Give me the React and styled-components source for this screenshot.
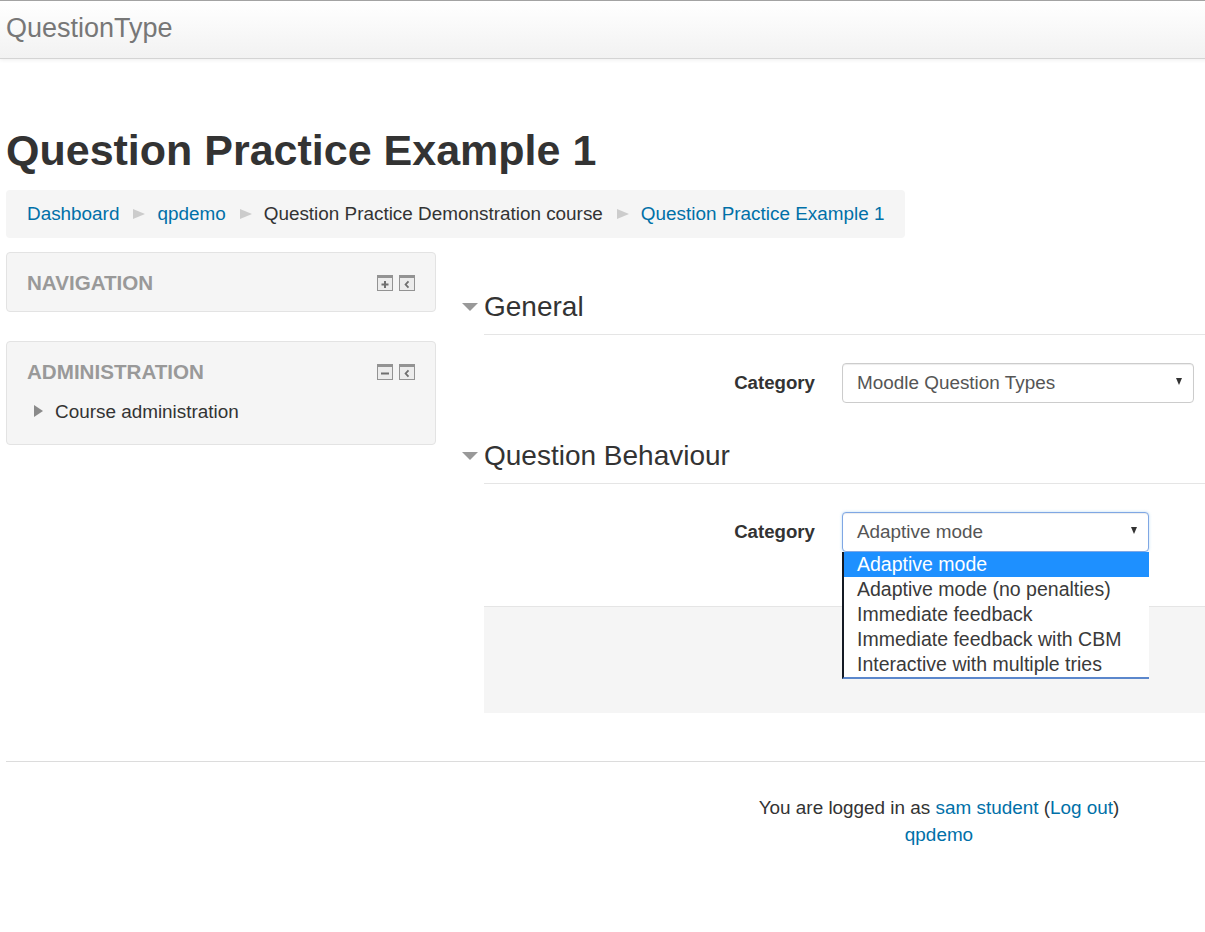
import React from "react";
import styled, { createGlobalStyle } from "styled-components";

const GlobalStyle = createGlobalStyle`
  html, body {
    margin: 0;
    padding: 0;
    overflow-x: hidden;
    background: #fff;
  }
  body {
    font-family: "Liberation Sans", Arial, Helvetica, sans-serif;
    font-size: 18.9px;
    line-height: 26.67px;
    color: #333;
  }
  * { box-sizing: border-box; }
`;

const Shell = styled.div`
  width: 1872px;
`;

const Navbar = styled.header`
  border-top: 1px solid #a3a3a3;
  border-bottom: 1px solid #d4d4d4;
  background: linear-gradient(to bottom, #ffffff, #f2f2f2);
  box-shadow: 0 1px 4px rgba(0, 0, 0, 0.07);
  padding: 12px 6px 15px;
`;

const Brand = styled.span`
  display: block;
  font-size: 27px;
  line-height: 30px;
  color: #777;
`;

const Page = styled.div`
  margin-left: 6px;
  width: 1866px;
`;

const Title = styled.h2`
  margin: 67px 0 16px;
  font-size: 43px;
  line-height: 48px;
  font-weight: bold;
  color: #333;
`;

const Crumbs = styled.nav`
  display: inline-flex;
  align-items: center;
  background: #f5f5f5;
  border-radius: 4px;
  padding: 10.67px 21px;
  height: 48px;
`;

const CrumbLink = styled.a`
  color: #0070a8;
  text-decoration: none;
`;

const CrumbText = styled.span`
  color: #333;
`;

const Sep = styled.span`
  display: inline-block;
  width: 0;
  height: 0;
  border-left: 12px solid #ccc;
  border-top: 5.5px solid transparent;
  border-bottom: 5.5px solid transparent;
  margin: 0 12px 0 14px;
`;

const Columns = styled.div`
  display: grid;
  grid-template-columns: 430px 1fr;
  column-gap: 48px;
  margin-top: 14px;
  align-items: start;
`;

const Side = styled.aside`
  display: flex;
  flex-direction: column;
  gap: 29px;
`;

const Block = styled.section`
  background: #f5f5f5;
  border: 1px solid #e3e3e3;
  border-radius: 4px;
  padding: 17px 20px 14px;
`;

const BlockHeader = styled.div`
  display: flex;
  align-items: center;
  justify-content: space-between;
`;

const BlockTitle = styled.h3`
  margin: 0;
  font-size: 20.6px;
  line-height: 26.67px;
  font-weight: bold;
  color: #999;
`;

const Controls = styled.div`
  display: flex;
  gap: 6px;
`;

const BlockContent = styled.ul`
  list-style: none;
  margin: 0;
  padding: 14px 0 4px 7px;
`;

const TreeItem = styled.li`
  display: flex;
  align-items: center;
  gap: 12px;
  color: #333;
`;

const Caret = styled.span`
  display: inline-block;
  width: 0;
  height: 0;
  border-left: 9px solid #8a8a8a;
  border-top: 6.5px solid transparent;
  border-bottom: 6.5px solid transparent;
  margin-top: -4px;
`;

const Main = styled.main`
  padding-top: 35px;
`;

const Fieldset = styled.fieldset`
  border: 0;
  margin: 0 0 33px;
  padding: 0;
  min-width: 0;
`;

const Legend = styled.div`
  position: relative;
  font-size: 28px;
  line-height: 40px;
  color: #333;
  padding-bottom: 7px;
  border-bottom: 1px solid #e5e5e5;
  margin-bottom: 28px;
`;

const LegendToggle = styled.span`
  position: absolute;
  left: -22px;
  top: 16px;
  width: 0;
  height: 0;
  border-top: 8px solid #999;
  border-left: 8px solid transparent;
  border-right: 8px solid transparent;
`;

const FormRow = styled.div`
  display: grid;
  grid-template-columns: 331px auto;
  column-gap: 27px;
  align-items: center;
  justify-content: start;
`;

const Label = styled.label`
  text-align: right;
  font-weight: bold;
  font-size: 18.67px;
  color: #333;
`;

const SelectWrap = styled.div`
  position: relative;
  width: ${(p) => p.$width}px;
`;

const SelectBox = styled.div`
  display: flex;
  align-items: center;
  justify-content: space-between;
  height: 40px;
  padding: 0 11px 0 14px;
  background: #fff;
  border: 1px solid ${(p) => (p.$focused ? "#7fa7e4" : "#ccc")};
  border-radius: 4px;
  box-shadow: ${(p) =>
    p.$focused
      ? "inset 0 1px 1px rgba(0,0,0,.075), 0 0 3px rgba(102,175,233,.45)"
      : "inset 0 1px 1px rgba(0,0,0,.075)"};
  color: #555;
`;

const Arrow = styled.span`
  width: 0;
  height: 0;
  border-top: 7px solid #333;
  border-left: 3.5px solid transparent;
  border-right: 3.5px solid transparent;
  margin-top: -3px;
`;

const OptionList = styled.ul`
  position: absolute;
  left: 0;
  right: 0;
  top: 40px;
  margin: 0;
  padding: 0;
  list-style: none;
  background: #fff;
  border-left: 2px solid #141a24;
  border-bottom: 2px solid #5b87cc;
  z-index: 5;
`;

const Option = styled.li`
  height: 25px;
  line-height: 25px;
  font-size: 19.5px;
  padding-left: 13px;
  white-space: nowrap;
  color: ${(p) => (p.$active ? "#fff" : "#3a3a3a")};
  background: ${(p) => (p.$active ? "#1e90ff" : "transparent")};
`;

const Actions = styled.div`
  height: 107px;
  margin-top: 54px;
  background: #f5f5f5;
  border-top: 1px solid #e5e5e5;
`;

const Footer = styled.footer`
  margin-top: 48px;
  border-top: 1px solid #dcdcdc;
  padding-top: 33px;
  text-align: center;
  color: #333;
`;

const FooterLine = styled.div`
  line-height: 26.67px;
`;

const FooterLink = styled.a`
  color: #0070a8;
  text-decoration: none;
`;

function ControlIcon({ kind }) {
  return (
    <svg width="16" height="16" viewBox="0 0 16 16" aria-hidden="true">
      <rect x="0.5" y="0.5" width="15" height="15" fill="#ececec" stroke="#939393" />
      <rect x="0" y="0" width="16" height="3" fill="#939393" />
      {kind === "plus" && (
        <path d="M4.5 9.5h7M8 6v7" stroke="#6f6f6f" strokeWidth="2" fill="none" />
      )}
      {kind === "minus" && (
        <path d="M4 9.5h8" stroke="#6f6f6f" strokeWidth="2" fill="none" />
      )}
      {kind === "dock" && (
        <path d="M9.5 6.3 6.6 9.5l2.9 3.2" stroke="#6f6f6f" strokeWidth="1.8" fill="none" />
      )}
    </svg>
  );
}

const behaviours = [
  "Adaptive mode",
  "Adaptive mode (no penalties)",
  "Immediate feedback",
  "Immediate feedback with CBM",
  "Interactive with multiple tries",
];

export default function App() {
  return (
    <>
      <GlobalStyle />
      <Shell>
        <Navbar>
          <Brand>QuestionType</Brand>
        </Navbar>
        <Page>
          <Title>Question Practice Example 1</Title>
          <Crumbs>
            <CrumbLink href="#">Dashboard</CrumbLink>
            <Sep />
            <CrumbLink href="#">qpdemo</CrumbLink>
            <Sep />
            <CrumbText>Question Practice Demonstration course</CrumbText>
            <Sep />
            <CrumbLink href="#">Question Practice Example 1</CrumbLink>
          </Crumbs>
          <Columns>
            <Side>
              <Block>
                <BlockHeader>
                  <BlockTitle>NAVIGATION</BlockTitle>
                  <Controls>
                    <ControlIcon kind="plus" />
                    <ControlIcon kind="dock" />
                  </Controls>
                </BlockHeader>
              </Block>
              <Block>
                <BlockHeader>
                  <BlockTitle>ADMINISTRATION</BlockTitle>
                  <Controls>
                    <ControlIcon kind="minus" />
                    <ControlIcon kind="dock" />
                  </Controls>
                </BlockHeader>
                <BlockContent>
                  <TreeItem>
                    <Caret />
                    Course administration
                  </TreeItem>
                </BlockContent>
              </Block>
            </Side>
            <Main>
              <Fieldset>
                <Legend>
                  <LegendToggle />
                  General
                </Legend>
                <FormRow>
                  <Label>Category</Label>
                  <SelectWrap $width={352}>
                    <SelectBox>
                      Moodle Question Types
                      <Arrow />
                    </SelectBox>
                  </SelectWrap>
                </FormRow>
              </Fieldset>
              <Fieldset>
                <Legend>
                  <LegendToggle />
                  Question Behaviour
                </Legend>
                <FormRow>
                  <Label>Category</Label>
                  <SelectWrap $width={307}>
                    <SelectBox $focused>
                      Adaptive mode
                      <Arrow />
                    </SelectBox>
                    <OptionList>
                      {behaviours.map((b, i) => (
                        <Option key={b} $active={i === 0}>
                          {b}
                        </Option>
                      ))}
                    </OptionList>
                  </SelectWrap>
                </FormRow>
              </Fieldset>
              <Actions />
            </Main>
          </Columns>
          <Footer>
            <FooterLine>
              You are logged in as <FooterLink href="#">sam student</FooterLink> (
              <FooterLink href="#">Log out</FooterLink>)
            </FooterLine>
            <FooterLine>
              <FooterLink href="#">qpdemo</FooterLink>
            </FooterLine>
          </Footer>
        </Page>
      </Shell>
    </>
  );
}
